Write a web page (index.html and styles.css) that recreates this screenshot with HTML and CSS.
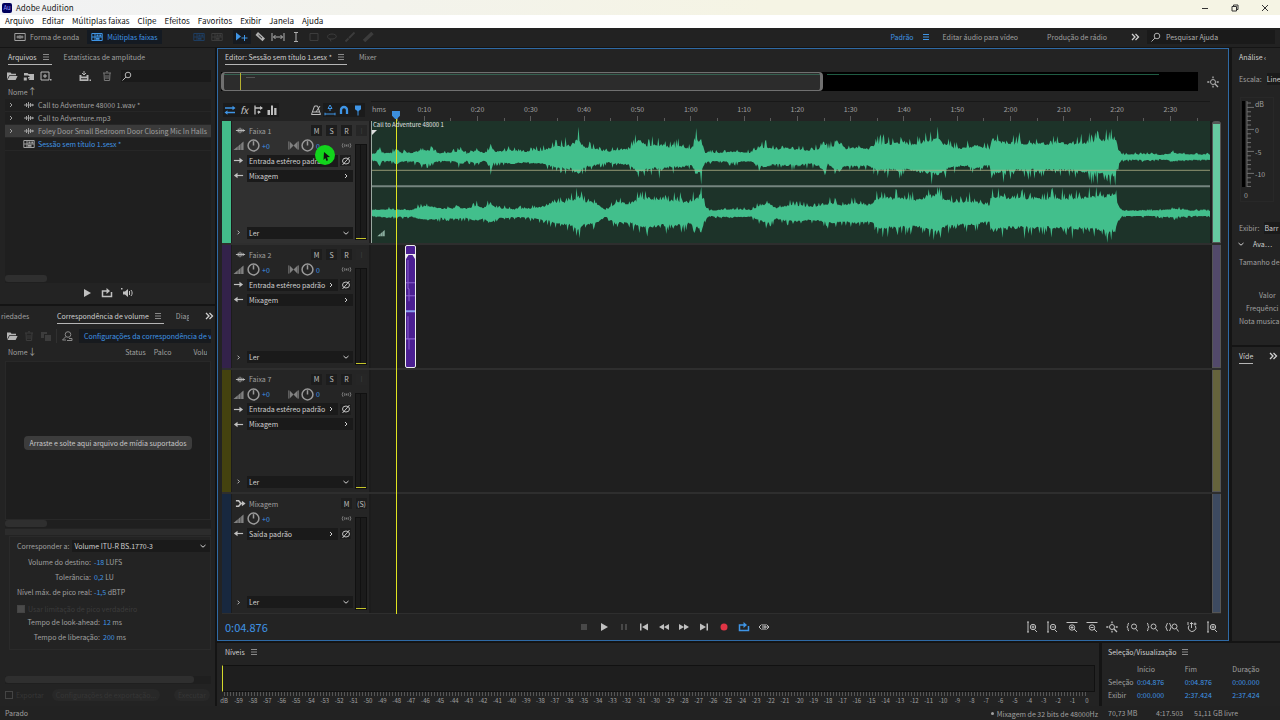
FILE: index.html
```html
<!DOCTYPE html>
<html lang="pt-BR">
<head>
    <meta charset="UTF-8">
    <meta name="viewport" content="width=device-width, initial-scale=1.0">
    <title>Adobe Audition</title>
    <link rel="stylesheet" href="styles.css">
</head>
<body>
    <!-- icon set -->
    <svg class="sprite" aria-hidden="true">
        <symbol id="i-menu" viewBox="0 0 12 12"><path d="M3 3.5h6M3 6h6M3 8.500h6"/></symbol>
        <symbol id="i-more" viewBox="0 0 12 12"><path d="M3 3l3 3-3 3M6.500 3l3 3-3 3" stroke-width="1.300"/></symbol>
        <symbol id="i-right" viewBox="0 0 12 12"><path d="M5 4l2 2-2 2"/></symbol>
        <symbol id="i-down" viewBox="0 0 12 12"><path d="M3.500 5L6 7.200 8.500 5"/></symbol>
        <symbol id="i-search" viewBox="0 0 12 12"><circle cx="7" cy="5" r="2.800"/><path d="M5 7L1.500 10.500"/></symbol>
        <symbol id="i-clip" viewBox="0 0 12 12"><path d="M1 6h10M3.500 4v4M5.500 3v6M7.500 4v4M9.300 4.800v2.400"/></symbol>
        <symbol id="i-wave" viewBox="0 0 12 12"><path d="M.8 2.500h10.400v7H.8zM2.500 6h7M4 4.500v3M6 4v4M8 4.500v3"/></symbol>
        <symbol id="i-multi" viewBox="0 0 12 12"><path d="M.8 2.500h10.400v7H.8zM1 6h10M4 2.500v7"/><path class="solid" d="M5.500 3.500h2v2h-2zM8.300 3.500h2v2h-2zM5 6.800h3.500v2H5z"/></symbol>
        <symbol id="i-folder" viewBox="0 0 12 12"><path class="solid" d="M1 2.500h3.500l1 1.200H10v1.500H3.200L1 9.500zM3.600 6h8l-2 4H1.500z"/></symbol>
        <symbol id="i-import" viewBox="0 0 12 12"><path class="solid" d="M1 3h3.500l1 1H11v6H5.500L7 8.500H5V7h2L5.500 5.500H1zM.8 7.500h3v3h-3z"/></symbol>
        <symbol id="i-new" viewBox="0 0 12 12"><path d="M1 2h8v8H1zM5 4v4M3 6h4"/><path class="solid" d="M10 9h1.500v1.500H10z"/></symbol>
        <symbol id="i-insert" viewBox="0 0 12 12"><path d="M5 1v4M3 3l2 2 2-2"/><path class="solid" d="M.5 5h2v1.500h5V5h2v6h-9zM10.500 9.500H12V11h-1.500z"/><path class="cut" d="M2 8.800h6"/></symbol>
        <symbol id="i-trash" viewBox="0 0 12 12"><path d="M2 3h8M5 1.800h2M3 3l.4 7.500h5.200L9 3M5 5v4M7 5v4"/></symbol>
        <symbol id="i-copy" viewBox="0 0 12 12"><path class="solid" d="M1 2h6v2H4v4H1zM5 5h6v6H5z"/></symbol>
        <symbol id="i-scan" viewBox="0 0 12 12"><circle cx="7" cy="4.500" r="2.800"/><path d="M5 6.500L1.500 10H5M8 8.500h3v2H6"/></symbol>
        <symbol id="i-play" viewBox="0 0 12 12"><path class="solid" d="M3 2l7 4-7 4z"/></symbol>
        <symbol id="i-stop" viewBox="0 0 12 12"><path class="solid" d="M3 3h6v6H3z"/></symbol>
        <symbol id="i-pause" viewBox="0 0 12 12"><path class="solid" d="M3 3h2v6H3zM7 3h2v6H7z"/></symbol>
        <symbol id="i-first" viewBox="0 0 12 12"><path class="solid" d="M2 2.500h1.500v7H2zM10 2.500v7L4 6z"/></symbol>
        <symbol id="i-last" viewBox="0 0 12 12"><path class="solid" d="M8.500 2.500H10v7H8.500zM2 2.500l6 3.500-6 3.500z"/></symbol>
        <symbol id="i-rew" viewBox="0 0 12 12"><path class="solid" d="M6 3v6L1 6zM11 3v6L6 6z"/></symbol>
        <symbol id="i-fwd" viewBox="0 0 12 12"><path class="solid" d="M1 3l5 3-5 3zM6 3l5 3-5 3z"/></symbol>
        <symbol id="i-rec" viewBox="0 0 12 12"><circle class="solid" cx="6" cy="6" r="3.500"/></symbol>
        <symbol id="i-loop" viewBox="0 0 12 12"><path d="M4 4H1.500v5.500h9V5M4 4h3" stroke-width="1.500"/><path class="solid" d="M5.500 1L9 4 5.500 7z"/></symbol>
        <symbol id="i-skip" viewBox="0 0 12 12"><path d="M3.500 3.500L1 6l2.500 2.500M5 3v6M7 3v6M6 6h4.500M8.500 3.500L11 6 8.500 8.500"/></symbol>
        <symbol id="i-speaker" viewBox="0 0 12 12"><path class="solid" d="M2 4.500h2L7 2v8L4 7.500H2zM0 1h1.500v1.500H0z"/><path d="M8.500 4v4M10 3c1.500 2 1.500 4 0 6"/></symbol>
        <symbol id="i-move" viewBox="0 0 12 12"><path class="solid" d="M0 1.500l5 4-5 4z"/><path d="M5.500 7h6M8.500 4v6"/></symbol>
        <symbol id="i-razor" viewBox="0 0 12 12"><path class="solid" d="M4 1l7 6.500-2.500 2.800L1.500 4z"/><path class="cut" d="M4.500 4l3.500 3.200"/></symbol>
        <symbol id="i-slip" viewBox="0 0 14 12"><path d="M1 2v8M13 2v8M2.500 6h9M4.500 4l-2 2 2 2M9.500 4l2 2-2 2"/></symbol>
        <symbol id="i-ibeam" viewBox="0 0 12 12"><path d="M4 1.500h4M6 1.500v9M4 10.500h4"/></symbol>
        <symbol id="i-marquee" viewBox="0 0 12 12"><path d="M2 2.500h8v7H2z"/></symbol>
        <symbol id="i-lasso" viewBox="0 0 12 12"><path d="M4 8C0 7 1 3 6 3s6 4 1 5H4l1 2.500"/></symbol>
        <symbol id="i-brush" viewBox="0 0 12 12"><path d="M10.500 1.500L5 7M4.500 7.500L1.500 10.500" stroke-width="1.800"/></symbol>
        <symbol id="i-heal" viewBox="0 0 12 12"><path d="M10.500 2L2 10" stroke-width="3.500"/></symbol>
        <symbol id="i-swap" viewBox="0 0 12 12"><path d="M1 4h9M2 8.500h9" stroke-width="1.400"/><path class="solid" d="M8.500 1.800L11.500 4l-3 2.200zM3.500 6.300L.5 8.500l3 2.200z"/></symbol>
        <symbol id="i-route" viewBox="0 0 12 12"><path d="M3 1.500v9M3 4h7M5.500 8H8" stroke-width="1.300"/><path class="solid" d="M8 2l3 2-3 2zM6 6.500L9 8 6 10z"/></symbol>
        <symbol id="i-eq" viewBox="0 0 12 12"><path class="solid" d="M1.500 6H4v5H1.500zM5 1.500h2V11H5zM8.200 4h2.300v7H8.200z"/></symbol>
        <symbol id="i-metro" viewBox="0 0 12 12"><path d="M4.500 2h3l3 8.500h-9zM6 8l4-6M3 8h6"/></symbol>
        <symbol id="i-snapt" viewBox="0 0 12 12"><path d="M1 10h10M6 1L4 4.500h4zM6 4.500V7M1 8.700v2.600M11 8.700v2.600"/></symbol>
        <symbol id="i-magnet" viewBox="0 0 12 12"><path d="M3 10V6a3 3 0 0 1 6 0v4" stroke-width="2.300"/></symbol>
        <symbol id="i-marker" viewBox="0 0 12 12"><path class="solid" d="M3 1.500h6v3.700L6 7.500 3 5.200z"/><path d="M6 6.500v5"/></symbol>
        <symbol id="i-vol" viewBox="0 0 12 12"><path class="solid" d="M.5 11L11.500 1.500V11z"/><path class="cut" d="M5.500 5v6M8.500 3v8" stroke-width=".5"/></symbol>
        <symbol id="i-knob" viewBox="0 0 12 12"><circle cx="6" cy="6" r="5" stroke-width="1.400"/><path d="M6 2v4" stroke-width="1.400"/></symbol>
        <symbol id="i-pan" viewBox="0 0 12 12"><path class="solid" d="M2 2l4 4-4 4zM10.500 1.500L6 6l4.500 4.500z"/><path d="M.9 1.500v9M11.300 1.500v9"/></symbol>
        <symbol id="i-monitor" viewBox="0 0 12 12"><path d="M2.200 3.500q-1.800 2.500 0 5M4.200 4.500q-1 1.500 0 3M7.800 4.500q1 1.500 0 3M9.800 3.500q1.800 2.500 0 5"/><circle class="solid" cx="6" cy="6" r="1"/></symbol>
        <symbol id="i-in" viewBox="0 0 12 12"><path d="M1 6h8" stroke-width="1.300"/><path class="solid" d="M7 3L11 6 7 9z"/></symbol>
        <symbol id="i-out" viewBox="0 0 12 12"><path d="M3 6h8" stroke-width="1.300"/><path class="solid" d="M5 3L1 6l4 3z"/></symbol>
        <symbol id="i-phase" viewBox="0 0 12 12"><ellipse cx="6" cy="6" rx="3.500" ry="3"/><path d="M2.500 10l7-8"/></symbol>
        <symbol id="i-mix" viewBox="0 0 12 12"><path d="M1 3h3l2.500 3L4 9H1M5 6h5" stroke-width="1.800"/><path class="solid" d="M7.500 3L11.500 6l-4 3z"/></symbol>
        <symbol id="i-zin-v" viewBox="0 0 12 12"><path d="M1 1h2M2 1v10M1 11h2M8.500 8.500l2.500 2.500M5.500 6h3M7 4.500v3"/><circle cx="7" cy="6" r="2.700"/></symbol>
        <symbol id="i-zout-v" viewBox="0 0 12 12"><path d="M1 1h2M2 1v10M1 11h2M8.500 8.500l2.500 2.500M5.500 6h3"/><circle cx="7" cy="6" r="2.700"/></symbol>
        <symbol id="i-zin-h" viewBox="0 0 12 12"><path d="M.5 1.500h11M8 8l3 3M4.500 6.500h3M6 5v3"/><circle cx="6" cy="6.500" r="2.700"/></symbol>
        <symbol id="i-zout-h" viewBox="0 0 12 12"><path d="M.5 1.500h11M8 8l3 3M4.500 6.500h3"/><circle cx="6" cy="6.500" r="2.700"/></symbol>
        <symbol id="i-zfull" viewBox="0 0 12 12"><circle cx="6" cy="6" r="2.500"/><path d="M7.800 7.800L11 11M6 .5v1.800M6 9.700v1.800M.3 6h2M9.700 6h2" stroke-width="1.300"/></symbol>
        <symbol id="i-zleft" viewBox="0 0 12 12"><path d="M3 2Q1.500 2.500 2 4.500L1 6l1 1.500Q1.500 9.500 3 10M9.500 7.500L12 10.500"/><circle cx="8" cy="5.500" r="2.500"/></symbol>
        <symbol id="i-zright" viewBox="0 0 12 12"><path d="M1 2q1.500.5 1 2.500L3 6 2 7.500Q2.500 9.500 1 10M9.500 7.500L12 10.500"/><circle cx="7.500" cy="5.500" r="2.500"/></symbol>
        <symbol id="i-zsel" viewBox="0 0 14 12"><path d="M2.500 2L.8 6l1.700 4M4.500 2l1.700 4-1.700 4M11.500 7.500L13.500 10.500"/><circle cx="9.500" cy="5.500" r="2.500"/></symbol>
        <symbol id="i-ztime" viewBox="0 0 12 12"><path d="M3 4.500a3.800 3.800 0 1 0 6.500.5M5.500 7V1.500M4 3l1.500-1.500L7 3M2 1v3M9 1.500v3M7.500 3h3"/></symbol>
    </svg>

    <header class="titlebar">
        <span class="app-logo">Au</span>
        <h1>Adobe Audition</h1>
        <div class="window-buttons">
            <button aria-label="Minimizar"><svg viewBox="0 0 12 12"><path d="M3 6.500h6"/></svg></button>
            <button aria-label="Restaurar"><svg viewBox="0 0 12 12"><path d="M3 4.500h4.500V9H3zM4.500 4.500V3H9v4.500H7.500"/></svg></button>
            <button aria-label="Fechar"><svg viewBox="0 0 12 12"><path d="M3 3l6 6M9 3L3 9"/></svg></button>
        </div>
    </header>

    <nav class="menubar">
        <a href="#">Arquivo</a>
        <a href="#">Editar</a>
        <a href="#">Múltiplas faixas</a>
        <a href="#">Clipe</a>
        <a href="#">Efeitos</a>
        <a href="#">Favoritos</a>
        <a href="#">Exibir</a>
        <a href="#">Janela</a>
        <a href="#">Ajuda</a>
    </nav>

    <div class="toolbar">
        <button class="view-button"><svg><use href="#i-wave"/></svg>Forma de onda</button>
        <button class="view-button on"><svg><use href="#i-multi"/></svg>Múltiplas faixas</button>
        <div class="tools">
            <button class="off blue" aria-label="Espectral"><svg><use href="#i-multi"/></svg></button>
            <button class="off" aria-label="Tom"><svg><use href="#i-multi"/></svg></button>
            <span class="tool-gap"></span>
            <button class="blue pressed" aria-label="Mover"><svg><use href="#i-move"/></svg></button>
            <button aria-label="Lâmina"><svg><use href="#i-razor"/></svg></button>
            <button aria-label="Deslizar"><svg class="wide"><use href="#i-slip"/></svg></button>
            <button aria-label="Tempo"><svg><use href="#i-ibeam"/></svg></button>
            <button class="off" aria-label="Marca"><svg><use href="#i-marquee"/></svg></button>
            <button class="off" aria-label="Laço"><svg><use href="#i-lasso"/></svg></button>
            <button class="off" aria-label="Pincel"><svg><use href="#i-brush"/></svg></button>
            <button class="off" aria-label="Recuperação"><svg><use href="#i-heal"/></svg></button>
        </div>
        <div class="workspaces">
            <a href="#" class="current">Padrão</a>
            <svg class="blue"><use href="#i-menu"/></svg>
            <a href="#">Editar áudio para vídeo</a>
            <a href="#" class="radio">Produção de rádio</a>
            <svg><use href="#i-more"/></svg>
        </div>
        <label class="help-search"><svg><use href="#i-search"/></svg><input type="text" placeholder="Pesquisar Ajuda" aria-label="Pesquisar Ajuda"></label>
    </div>

    <div class="workspace">
        <aside class="left">
            <section class="panel files">
                <div class="tabs">
                    <a href="#" class="tab active">Arquivos <svg><use href="#i-menu"/></svg></a>
                    <a href="#" class="tab">Estatísticas de amplitude</a>
                </div>
                <div class="icon-row">
                    <button aria-label="Abrir"><svg><use href="#i-folder"/></svg></button>
                    <button aria-label="Importar"><svg><use href="#i-import"/></svg></button>
                    <button aria-label="Novo"><svg><use href="#i-new"/></svg></button>
                    <button class="push" aria-label="Inserir"><svg><use href="#i-insert"/></svg></button>
                    <button class="dim" aria-label="Excluir"><svg><use href="#i-trash"/></svg></button>
                    <label class="file-search"><svg><use href="#i-search"/></svg><input type="text" aria-label="Filtrar arquivos"></label>
                </div>
                <div class="list-head">Nome<span class="arrow">↑</span></div>
                <ul class="file-list">
                    <li><svg><use href="#i-right"/></svg><svg><use href="#i-clip"/></svg>Call to Adventure 48000 1.wav *</li>
                    <li><svg><use href="#i-right"/></svg><svg><use href="#i-clip"/></svg>Call to Adventure.mp3</li>
                    <li class="selected"><svg><use href="#i-right"/></svg><svg><use href="#i-clip"/></svg>Foley Door Small Bedroom Door Closing Mic In Halls</li>
                    <li class="session"><svg></svg><svg><use href="#i-multi"/></svg><a href="#">Sessão sem título 1.sesx *</a></li>
                </ul>
                <div class="hscroll"><i></i></div>
                <div class="preview">
                    <button aria-label="Reproduzir"><svg><use href="#i-play"/></svg></button>
                    <button aria-label="Repetir"><svg><use href="#i-loop"/></svg></button>
                    <button aria-label="Reprodução automática"><svg><use href="#i-speaker"/></svg></button>
                </div>
            </section>

            <section class="panel loudness">
                <div class="tabs">
                    <a href="#" class="tab cut-left">riedades</a>
                    <a href="#" class="tab active">Correspondência de volume <svg><use href="#i-menu"/></svg></a>
                    <a href="#" class="tab cut-right">Diag</a>
                    <svg class="more"><use href="#i-more"/></svg>
                </div>
                <div class="icon-row">
                    <button aria-label="Abrir"><svg><use href="#i-folder"/></svg></button>
                    <button class="off" aria-label="Excluir"><svg><use href="#i-trash"/></svg></button>
                    <button class="off" aria-label="Copiar"><svg><use href="#i-copy"/></svg></button>
                    <button class="scan" aria-label="Verificar"><svg><use href="#i-scan"/></svg></button>
                    <button class="settings">Configurações da correspondência de v</button>
                </div>
                <div class="list-head columns"><span class="c-name">Nome<span class="arrow">↓</span></span><span>Status</span><span>Palco</span><span class="c-vol">Volu</span></div>
                <div class="drop-zone"><p>Arraste e solte aqui arquivo de mídia suportados</p></div>
                <div class="hscroll"><i></i></div>
                <div class="splitter"></div>
                <form class="match">
                    <div class="match-type">
                        <label for="match">Corresponder a:</label>
                        <div class="field"><select id="match"><option>Volume ITU-R BS.1770-3</option></select><svg><use href="#i-down"/></svg></div>
                    </div>
                    <dl>
                        <dt>Volume do destino:</dt><dd><a href="#">-18</a> LUFS</dd>
                        <dt>Tolerância:</dt><dd><a href="#">0,2</a> LU</dd>
                        <dt>Nível máx. de pico real:</dt><dd><a href="#">-1,5</a> dBTP</dd>
                    </dl>
                    <label class="limit"><input type="checkbox" checked disabled>Usar limitação de pico verdadeiro</label>
                    <dl class="wide">
                        <dt>Tempo de look-ahead:</dt><dd><a href="#">12</a> ms</dd>
                        <dt>Tempo de liberação:</dt><dd><a href="#">200</a> ms</dd>
                    </dl>
                </form>
                <div class="hscroll long"><i></i></div>
                <div class="export">
                    <label><input type="checkbox" disabled>Exportar</label>
                    <button disabled>Configurações de exportação...</button>
                    <button disabled>Executar</button>
                </div>
            </section>
        </aside>

        <div class="center">
            <div class="upper">
                <main class="editor">
                    <div class="tabs">
                        <a href="#" class="tab active">Editor: Sessão sem título 1.sesx * <svg><use href="#i-menu"/></svg></a>
                        <a href="#" class="tab">Mixer</a>
                    </div>

                    <div class="navigator">
                        <div class="nav-track"><div class="nav-view"><i class="nav-head"></i><i class="nav-clip"></i></div><i class="nav-line"></i></div>
                        <button aria-label="Zoom total"><svg><use href="#i-zfull"/></svg></button>
                    </div>

                    <div class="timeline-head">
                        <div class="track-tools">
                            <button class="blue pressed" aria-label="Entradas e saídas"><svg><use href="#i-swap"/></svg></button>
                            <button class="fx" aria-label="Efeitos">fx</button>
                            <button aria-label="Envios"><svg><use href="#i-route"/></svg></button>
                            <button aria-label="Equalizador"><svg><use href="#i-eq"/></svg></button>
                            <button class="push" aria-label="Metrônomo"><svg><use href="#i-metro"/></svg></button>
                            <button class="blue pressed" aria-label="Ajuste de tempo"><svg><use href="#i-snapt"/></svg></button>
                            <button class="blue pressed" aria-label="Encaixe"><svg><use href="#i-magnet"/></svg></button>
                            <button class="blue pressed" aria-label="Marcador"><svg><use href="#i-marker"/></svg></button>
                        </div>
                        <div class="ruler" id="ruler"><span class="unit">hms</span></div>
                    </div>

                    <div class="tracks">
                        <section class="track green selected">
                            <div class="controls">
                                <div class="row head"><svg><use href="#i-clip"/></svg><span class="name">Faixa 1</span><button>M</button><button>S</button><button>R</button><button class="off">I</button></div>
                                <div class="body">
                                    <div class="rows">
                                        <div class="row"><svg class="grey"><use href="#i-vol"/></svg><svg class="knob"><use href="#i-knob"/></svg><a href="#" class="gain">+0</a><svg class="grey"><use href="#i-pan"/></svg><svg class="knob"><use href="#i-knob"/></svg><a href="#" class="pan">0</a><svg class="grey"><use href="#i-monitor"/></svg></div>
                                        <div class="row"><svg><use href="#i-in"/></svg><div class="field"><select aria-label="Entrada"><option>Entrada estéreo padrão</option></select><svg><use href="#i-right"/></svg></div><button aria-label="Fase"><svg><use href="#i-phase"/></svg></button></div>
                                        <div class="row"><svg><use href="#i-out"/></svg><div class="field"><select aria-label="Saída"><option>Mixagem</option></select><svg><use href="#i-right"/></svg></div></div>
                                        <div class="row last"><svg><use href="#i-right"/></svg><div class="field"><select aria-label="Automação"><option>Ler</option></select><svg><use href="#i-down"/></svg></div></div>
                                    </div>
                                    <div class="vu"></div>
                                </div>
                                <div class="pointer"><svg viewBox="0 0 20 20"><path d="M9 7l6 5-3 .3 1 3-1.500.6-1.200-2.900L8.500 15z"/></svg></div>
                            </div>
                            <div class="lane">
                                <div class="clip-audio">
                                    <span class="clip-name">Call to Adventure 48000 1</span>
                                    <svg id="waveform" viewBox="0 0 840 122" preserveAspectRatio="none"></svg>
                                    <svg class="clip-gain"><use href="#i-vol"/></svg>
                                </div>
                            </div>
                            <div class="overview"></div>
                        </section>

                        <section class="track purple">
                            <div class="controls">
                                <div class="row head"><svg><use href="#i-clip"/></svg><span class="name">Faixa 2</span><button>M</button><button>S</button><button>R</button><button class="off">I</button></div>
                                <div class="body">
                                    <div class="rows">
                                        <div class="row"><svg class="grey"><use href="#i-vol"/></svg><svg class="knob"><use href="#i-knob"/></svg><a href="#" class="gain">+0</a><svg class="grey"><use href="#i-pan"/></svg><svg class="knob"><use href="#i-knob"/></svg><a href="#" class="pan">0</a><svg class="grey"><use href="#i-monitor"/></svg></div>
                                        <div class="row"><svg><use href="#i-in"/></svg><div class="field"><select aria-label="Entrada"><option>Entrada estéreo padrão</option></select><svg><use href="#i-right"/></svg></div><button aria-label="Fase"><svg><use href="#i-phase"/></svg></button></div>
                                        <div class="row"><svg><use href="#i-out"/></svg><div class="field"><select aria-label="Saída"><option>Mixagem</option></select><svg><use href="#i-right"/></svg></div></div>
                                        <div class="row last"><svg><use href="#i-right"/></svg><div class="field"><select aria-label="Automação"><option>Ler</option></select><svg><use href="#i-down"/></svg></div></div>
                                    </div>
                                    <div class="vu"></div>
                                </div>
                            </div>
                            <div class="lane">
                                <div class="clip-door">
                                    <svg viewBox="0 0 9 120" preserveAspectRatio="none"><path class="fade" d="M0 8h9v5L6.500 9h-4L0 13z"/><path d="M0 36.500h9M0 49.500h9M0 92.500h9M2 14v28l1 1v12M2 70v22l1 1v10"/><path class="env" d="M0 65h9"/></svg>
                                </div>
                            </div>
                            <div class="overview"></div>
                        </section>

                        <section class="track olive">
                            <div class="controls">
                                <div class="row head"><svg><use href="#i-clip"/></svg><span class="name">Faixa 7</span><button>M</button><button>S</button><button>R</button><button class="off">I</button></div>
                                <div class="body">
                                    <div class="rows">
                                        <div class="row"><svg class="grey"><use href="#i-vol"/></svg><svg class="knob"><use href="#i-knob"/></svg><a href="#" class="gain">+0</a><svg class="grey"><use href="#i-pan"/></svg><svg class="knob"><use href="#i-knob"/></svg><a href="#" class="pan">0</a><svg class="grey"><use href="#i-monitor"/></svg></div>
                                        <div class="row"><svg><use href="#i-in"/></svg><div class="field"><select aria-label="Entrada"><option>Entrada estéreo padrão</option></select><svg><use href="#i-right"/></svg></div><button aria-label="Fase"><svg><use href="#i-phase"/></svg></button></div>
                                        <div class="row"><svg><use href="#i-out"/></svg><div class="field"><select aria-label="Saída"><option>Mixagem</option></select><svg><use href="#i-right"/></svg></div></div>
                                        <div class="row last"><svg><use href="#i-right"/></svg><div class="field"><select aria-label="Automação"><option>Ler</option></select><svg><use href="#i-down"/></svg></div></div>
                                    </div>
                                    <div class="vu"></div>
                                </div>
                            </div>
                            <div class="lane"></div>
                            <div class="overview"></div>
                        </section>

                        <section class="track navy">
                            <div class="controls">
                                <div class="row head"><svg><use href="#i-mix"/></svg><span class="name">Mixagem</span><button>M</button><button>(S)</button></div>
                                <div class="body">
                                    <div class="rows">
                                        <div class="row"><svg class="grey"><use href="#i-vol"/></svg><svg class="knob"><use href="#i-knob"/></svg><a href="#" class="gain">+0</a><svg class="grey end"><use href="#i-monitor"/></svg></div>
                                        <div class="row"><svg><use href="#i-out"/></svg><div class="field"><select aria-label="Saída"><option>Saída padrão</option></select><svg><use href="#i-right"/></svg></div><button aria-label="Fase"><svg><use href="#i-phase"/></svg></button></div>
                                        <div class="row last"><svg><use href="#i-right"/></svg><div class="field"><select aria-label="Automação"><option>Ler</option></select><svg><use href="#i-down"/></svg></div></div>
                                    </div>
                                    <div class="vu"></div>
                                </div>
                            </div>
                            <div class="lane"></div>
                            <div class="overview"></div>
                        </section>

                        <div class="playhead-layer"><div class="playhead" id="playhead"></div></div>
                    </div>

                    <div class="transport">
                        <output class="time">0:04.876</output>
                        <div class="buttons">
                            <button class="off" aria-label="Parar"><svg><use href="#i-stop"/></svg></button>
                            <button aria-label="Reproduzir"><svg><use href="#i-play"/></svg></button>
                            <button class="off" aria-label="Pausar"><svg><use href="#i-pause"/></svg></button>
                            <button aria-label="Início"><svg><use href="#i-first"/></svg></button>
                            <button aria-label="Retroceder"><svg><use href="#i-rew"/></svg></button>
                            <button aria-label="Avançar"><svg><use href="#i-fwd"/></svg></button>
                            <button aria-label="Fim"><svg><use href="#i-last"/></svg></button>
                            <button class="red" aria-label="Gravar"><svg><use href="#i-rec"/></svg></button>
                            <button class="blue" aria-label="Repetir"><svg><use href="#i-loop"/></svg></button>
                            <button aria-label="Ignorar seleção"><svg><use href="#i-skip"/></svg></button>
                        </div>
                        <div class="buttons zooms">
                            <button aria-label="Mais amplitude"><svg><use href="#i-zin-v"/></svg></button>
                            <button aria-label="Menos amplitude"><svg><use href="#i-zout-v"/></svg></button>
                            <button aria-label="Mais tempo"><svg><use href="#i-zin-h"/></svg></button>
                            <button aria-label="Menos tempo"><svg><use href="#i-zout-h"/></svg></button>
                            <button aria-label="Zoom total"><svg><use href="#i-zfull"/></svg></button>
                            <button aria-label="Zoom no ponto de entrada"><svg><use href="#i-zleft"/></svg></button>
                            <button aria-label="Zoom no ponto de saída"><svg><use href="#i-zright"/></svg></button>
                            <button aria-label="Zoom na seleção"><svg class="wide"><use href="#i-zsel"/></svg></button>
                            <button aria-label="Zoom temporizado"><svg><use href="#i-ztime"/></svg></button>
                            <button aria-label="Zoom na faixa"><svg><use href="#i-zin-v"/></svg></button>
                        </div>
                    </div>
                </main>

                <aside class="right">
                    <section class="panel phase">
                        <div class="tabs"><a href="#" class="tab strong">Análise ‹</a></div>
                        <div class="scale-row"><label for="scale">Escala:</label><select id="scale"><option>Line</option></select></div>
                        <div class="db-meter">
                            <svg viewBox="0 0 14 86"><path class="bar" d="M1 0h3v86H1z"/><path id="db-ticks" d=""/></svg>
                            <ul><li>dB</li><li>0</li><li>-5</li><li>-10</li></ul>
                            <span>0</span>
                        </div>
                        <div class="show-row"><label for="show">Exibir:</label><select id="show"><option>Barr</option></select></div>
                        <div class="advanced"><svg><use href="#i-down"/></svg>Ava…</div>
                        <p class="size">Tamanho de</p>
                        <p class="value">Valor</p>
                        <p class="freq">Frequênci</p>
                        <p>Nota musica</p>
                    </section>
                    <section class="panel video">
                        <div class="tabs"><a href="#" class="tab active">Víde</a><svg class="more"><use href="#i-more"/></svg></div>
                    </section>
                </aside>
            </div>

            <div class="lower">
                <section class="panel levels">
                    <div class="tabs"><a href="#" class="tab strong">Níveis <svg><use href="#i-menu"/></svg></a></div>
                    <div class="level-meter"></div>
                    <div class="level-ticks"></div>
                    <ol class="level-scale" id="scale-db"></ol>
                </section>
                <section class="panel selection">
                    <div class="tabs"><a href="#" class="tab strong">Seleção/Visualização <svg><use href="#i-menu"/></svg></a></div>
                    <table>
                        <thead><tr><td></td><th>Início</th><th>Fim</th><th>Duração</th></tr></thead>
                        <tbody>
                            <tr><th>Seleção</th><td>0:04.876</td><td>0:04.876</td><td>0:00.000</td></tr>
                            <tr><th>Exibir</th><td>0:00.000</td><td>2:37.424</td><td>2:37.424</td></tr>
                        </tbody>
                    </table>
                </section>
            </div>
        </div>
    </div>

    <footer class="status">
        <span>Parado</span>
        <span class="mix"><i class="dot"></i>Mixagem de 32 bits de 48000Hz</span>
        <span class="mem">70,73 MB</span>
        <span class="len">4:17.503</span>
        <span class="free">51,11 GB livre</span>
    </footer>

    <script src="script.js"></script>
</body>
</html>
```
FILE: styles.css
```css
:root {
    --ui: "Noto Sans CJK JP", "Noto Sans", sans-serif;
    --bg: #232323;
    --dark: #1a1a1a;
    --gap: #141414;
    --text: #a0a0a0;
    --bright: #d0d0d0;
    --blue: #3f95e6;
}
* {
    box-sizing: border-box;
}
body {
    margin: 0;
    min-height: 100vh;
    display: flex;
    flex-direction: column;
    background-color: var(--gap);
    color: var(--text);
    font-family: var(--ui);
    font-size: 7px;
    line-height: 12px;
    overflow: hidden;
}
h1, p, ul, ol, dl, dd {
    margin: 0;
    padding: 0;
    list-style: none;
}
a {
    color: inherit;
    text-decoration: none;
}
button, input, select {
    margin: 0;
    padding: 0;
    border: none;
    background: none;
    color: inherit;
    font: inherit;
}
select {
    appearance: none;
}
svg {
    width: 12px;
    height: 12px;
    flex: none;
    fill: none;
    stroke: currentColor;
    stroke-width: 1;
}
svg.wide {
    width: 14px;
}
.sprite {
    position: absolute;
    width: 0;
    height: 0;
}
.solid {
    fill: currentColor;
    stroke: none;
}
.cut {
    stroke: #222;
}
button {
    display: flex;
    align-items: center;
    justify-content: center;
    white-space: nowrap;
}
.blue {
    color: var(--blue);
}
.red {
    color: #e03545;
}
.dim {
    color: #777;
}
.off {
    color: #3c3c3c;
}
.off.blue {
    color: #1e3d60;
}
.pressed {
    background-color: #161a20;
}

/* window chrome */
.titlebar {
    display: flex;
    align-items: center;
    height: 15px;
    padding-left: 2px;
    background: linear-gradient(90deg, #f1f2f4, #f5f4e4 60%);
    color: #222;
}
.app-logo {
    width: 10px;
    height: 10px;
    border-radius: 2px;
    background-color: #00005b;
    color: #9999ff;
    font-size: 6px;
    line-height: 10px;
    text-align: center;
}
h1 {
    margin-left: 4px;
    font-size: 8px;
    font-weight: normal;
}
.window-buttons {
    display: flex;
    margin-left: auto;
    color: #333;
}
.window-buttons button {
    width: 30px;
}
.menubar {
    display: flex;
    gap: 8px;
    height: 13px;
    padding-left: 5px;
    background-color: #fff;
    color: #111;
    font-size: 8px;
}

/* toolbar */
.toolbar {
    display: flex;
    align-items: center;
    height: 20px;
    padding: 0 0 1px 10px;
    border-bottom: 1px solid #151515;
    background-color: #222;
}
.view-button {
    gap: 4px;
    height: 14px;
    padding: 0 4px;
}
.view-button.on {
    margin-left: 4px;
    background-color: #141a22;
    color: var(--blue);
}
.tools {
    display: flex;
    margin-left: 28px;
    color: #b0b0b0;
}
.tools button {
    width: 18px;
    height: 14px;
}
.tool-gap {
    width: 7px;
}
.workspaces {
    display: flex;
    align-items: center;
    margin-left: auto;
}
.workspaces a {
    margin-right: 29px;
}
.workspaces .current {
    margin-right: 6px;
    color: var(--blue);
}
.workspaces .blue {
    margin-right: 11px;
}
.workspaces .radio {
    margin-right: 22px;
}
.workspaces svg:last-child {
    margin-right: 6px;
    color: var(--bright);
}
.help-search {
    display: flex;
    align-items: center;
    gap: 4px;
    width: 128px;
    height: 14px;
    margin-right: 5px;
    padding-left: 3px;
    background-color: var(--dark);
    color: #b0b0b0;
}
.help-search input, .file-search input {
    flex: 1;
    min-width: 0;
    height: 12px;
}
.help-search input::placeholder {
    color: #b0b0b0;
}

/* panels */
.workspace {
    flex: 1;
    display: flex;
    min-height: 0;
}
.panel {
    background-color: var(--bg);
}
.tabs {
    display: flex;
    height: 18px;
    padding: 2px 0 0 8px;
}
.tab {
    display: flex;
    height: 14px;
    margin-right: 12px;
    white-space: nowrap;
}
.tab.active {
    border-bottom: 1px solid #b5b5b5;
    color: var(--bright);
}
.tab.strong {
    color: var(--bright);
}
.tab svg {
    margin-left: 3px;
    color: #8a8a8a;
}
.left {
    flex: none;
    width: 215px;
    display: flex;
    flex-direction: column;
    overflow: hidden;
}
.files {
    height: 256px;
    display: flex;
    flex-direction: column;
    padding-top: 1px;
}
.icon-row {
    display: flex;
    align-items: center;
    height: 16px;
    margin: 1px 4px 0 3px;
    color: #b5b5b5;
}
.icon-row button {
    width: 17px;
    height: 14px;
}
.icon-row .push {
    margin-left: 22px;
}
.icon-row .dim {
    margin: 0 6px 0 5px;
}
.icon-row .off {
    color: #3c3c3c;
}
.file-search {
    flex: 1;
    display: flex;
    align-items: center;
    height: 12px;
    background-color: var(--dark);
}
.list-head {
    height: 15px;
    padding: 2px 8px 0;
}
.arrow {
    font-size: 9px;
}
.file-list {
    flex: 1;
    margin: 0 4px 0 5px;
    overflow: hidden;
    background-color: #1f1f1f;
}
.file-list li {
    display: flex;
    align-items: center;
    height: 13px;
    border-bottom: 1px solid #262626;
    white-space: nowrap;
}
.file-list svg:nth-child(2) {
    margin: 0 3px 0 6px;
}
.file-list .selected {
    background-color: #3a3a3a;
}
.file-list .session a {
    color: var(--blue);
}
.hscroll {
    height: 8px;
    margin: 0 4px 0 5px;
    background-color: #1f1f1f;
}
.hscroll i {
    display: block;
    width: 42px;
    height: 7px;
    border-radius: 3px;
    background-color: #2f2f2f;
}
.hscroll.long {
    margin-top: 26px;
}
.hscroll.long i {
    width: 189px;
}
.preview {
    display: flex;
    justify-content: center;
    height: 21px;
    padding-right: 2px;
    color: #c0c0c0;
}
.preview button {
    width: 20px;
    height: 19px;
}
.loudness {
    flex: 1;
    display: flex;
    flex-direction: column;
    margin-top: 2px;
    padding-top: 2px;
}
.loudness .tabs {
    padding-left: 1px;
}
.loudness .icon-row {
    margin-top: 2px;
}
.tab.cut-left {
    width: 44px;
}
.tab.cut-right {
    width: 13px;
    overflow: hidden;
}
.more {
    margin-left: auto;
    color: var(--bright);
}
.icon-row .scan {
    width: 21px;
    margin: 0 2px;
    border-left: 1px solid #303030;
    color: #8a8a8a;
}
.icon-row .settings {
    flex: 1;
    justify-content: flex-start;
    min-width: 0;
    padding-left: 5px;
    overflow: hidden;
    background-color: #171a1e;
    color: var(--blue);
}
.columns {
    display: flex;
    height: 17px;
}
.c-name {
    width: 121px;
}
.columns > span + span {
    margin-right: 8px;
}
.columns > .c-vol {
    width: 14px;
    margin: 0 0 0 14px;
    overflow: hidden;
}
.drop-zone {
    flex: 1;
    display: flex;
    align-items: center;
    justify-content: center;
    margin: 0 4px 0 5px;
    padding-top: 4px;
    border: 1px solid #282828;
    background-color: #1e1e1e;
}
.drop-zone p {
    padding: 1px 5px;
    border-radius: 4px;
    background-color: #3c3c3c;
    color: #c8c8c8;
}
.splitter {
    height: 6px;
    margin: 1px 4px 0 5px;
    background-color: #2c2c2c;
}
.match {
    height: 114px;
    margin: 1px 4px 0 9px;
    padding: 3px 0 0 7px;
    border: 1px solid #2a2a2a;
}
.match-type {
    display: flex;
    gap: 3px;
    height: 16px;
}
.field {
    position: relative;
    flex: 1;
    height: 12px;
    background-color: var(--dark);
    color: var(--bright);
}
.field select {
    display: block;
    width: 100%;
    height: 12px;
    padding-left: 2px;
}
.field svg {
    position: absolute;
    right: 1px;
    top: 0;
    pointer-events: none;
}
dl {
    display: grid;
    grid-template-columns: 74px 1fr;
    grid-auto-rows: 15px;
    column-gap: 3px;
}
dl.wide {
    grid-template-columns: 83px 1fr;
}
dt {
    text-align: right;
    white-space: nowrap;
}
dd a {
    color: var(--blue);
}
.limit {
    display: flex;
    align-items: center;
    gap: 3px;
    height: 15px;
    color: #3c3c3c;
}
.limit input, .export input {
    appearance: none;
    width: 8px;
    height: 8px;
    border: 1px solid #444;
}
.limit input:checked {
    background-color: #4a4a4a;
}
.export {
    display: flex;
    align-items: center;
    height: 22px;
    padding: 0 5px;
    color: #363636;
}
.export label {
    display: flex;
    align-items: center;
    gap: 3px;
    margin-right: 8px;
}
.export button {
    padding: 0 4px;
    border-radius: 6px;
    background-color: #282828;
    color: #363636;
}
.export button:last-child {
    margin-left: auto;
}

/* editor */
.center {
    flex: 1;
    display: flex;
    flex-direction: column;
    min-width: 0;
    margin-left: 2px;
}
.upper {
    flex: 1;
    display: flex;
    min-height: 0;
}
.editor {
    flex: 1;
    display: flex;
    flex-direction: column;
    min-width: 0;
    border: 1px solid #2f6aa5;
    background-color: var(--bg);
}
.editor > .tabs {
    padding-left: 7px;
}
.navigator {
    display: flex;
    height: 19px;
    margin: 5px 0 10px 3px;
}
.navigator button {
    width: 30px;
    color: #b0b0b0;
}
.nav-track {
    position: relative;
    flex: 1;
    background-color: #000;
}
.nav-view {
    position: relative;
    width: 61.6%;
    height: 19px;
    border: 1px solid #707070;
    border-width: 1px 3px;
    border-radius: 4px;
    background: linear-gradient(#2c2c2c 1px, #35604f 1px, #35604f 2px, #2c2c2c 2px);
}
.nav-line {
    position: absolute;
    left: 62%;
    right: 39px;
    top: 2px;
    height: 1px;
    background-color: #1f5c43;
}
.nav-head {
    position: absolute;
    left: 16px;
    top: 0;
    width: 1px;
    height: 17px;
    background-color: #b5b030;
}
.nav-clip {
    position: absolute;
    left: 22px;
    top: 4px;
    width: 9px;
    height: 1px;
    background-color: #555;
}
.timeline-head {
    display: grid;
    grid-template-columns: 149px 1fr;
    height: 20px;
    padding: 0 18px 0 4px;
}
.track-tools {
    display: flex;
    align-items: center;
    padding: 0 6px 2px 1px;
    color: #c0c0c0;
}
.track-tools button {
    width: 14px;
    height: 14px;
    background-color: #1b1b1b;
}
.track-tools .push {
    margin-left: auto;
    background: none;
}
.track-tools .fx {
    font-size: 10px;
    font-style: italic;
}
.ruler {
    position: relative;
    border: 1px solid #181818;
    border-width: 1px 0 0;
}
.ruler .unit {
    position: absolute;
    left: 1px;
    top: 1px;
}
.mark {
    position: absolute;
    bottom: 0;
    height: 18px;
    width: 30px;
    margin-left: -15px;
    text-align: center;
    background: linear-gradient(#5a5a5a, #5a5a5a) 50% 100% / 1px 5px no-repeat;
}
.mark.minor {
    background-size: 1px 3px;
}
.tracks {
    position: relative;
    flex: 1;
    display: flex;
    flex-direction: column;
    padding: 0 7px 0 4px;
}
.track {
    flex: 31 1 0;
    display: grid;
    grid-template-columns: 137px 1fr 9px;
    column-gap: 2px;
    padding-left: 10px;
    border-bottom: 2px solid #2e2e2e;
    background: linear-gradient(90deg, var(--tone) 9px, #1c1c1c 9px);
}
.green {
    --tone: #43bd8a;
    --tone-soft: #67c8a0;
}
.purple {
    --tone: #33224a;
    --tone-soft: #52496a;
}
.olive {
    --tone: #44420f;
    --tone-soft: #65633c;
}
.navy {
    --tone: #18283f;
    --tone-soft: #3d4a60;
    flex-grow: 30;
    border-bottom-width: 1px;
}
.controls {
    position: relative;
    display: flex;
    flex-direction: column;
    padding-top: 2px;
    background-color: #252525;
}
.selected .controls {
    background-color: #303030;
}
.row {
    display: flex;
    align-items: center;
    height: 15px;
}
.row > svg {
    width: 13px;
    height: 11px;
    padding: 0 1px;
    color: #c0c0c0;
}
.row > svg:first-child {
    margin-right: 2px;
}
.row > svg.grey {
    color: #808080;
}
.row > svg.grey:first-child {
    margin-right: 1px;
}
.row > svg.knob {
    height: 13px;
    padding: 0;
    color: #999;
}
.row > .end {
    margin-left: auto;
}
.head > svg {
    margin-left: 2px;
}
.head .name {
    flex: 1;
}
.row button {
    width: 11px;
    height: 11px;
    margin: 0 2px;
    background-color: #1d1d1d;
    color: #c0c0c0;
}
.row button.off {
    background-color: #262626;
    color: #3c3c3c;
}
.gain {
    width: 27px;
    padding-left: 2px;
    color: var(--blue);
}
.pan {
    flex: 1;
    padding-left: 2px;
    color: var(--blue);
}
.row .grey + .knob {
    margin-left: 1px;
}
.body {
    flex: 1;
    display: flex;
}
.rows {
    flex: 1;
    display: flex;
    flex-direction: column;
    padding-right: 2px;
}
.row.last {
    margin-top: auto;
    margin-bottom: 3px;
}
.vu {
    width: 12px;
    margin: 6px 2px 3px 0;
    border: 1px solid #111;
    background: linear-gradient(#c5c52a, #c5c52a) 50% 100% / 10px 1px no-repeat, linear-gradient(90deg, #1b1b1b 4px, #111 4px, #111 5px, #1b1b1b 5px);
}
.pointer {
    position: absolute;
    left: 83px;
    top: 24px;
    width: 20px;
    height: 20px;
    border-radius: 50%;
    background-color: #12d41c;
}
.pointer svg {
    width: 20px;
    height: 20px;
    fill: #111;
    stroke: none;
}
.lane {
    position: relative;
    background-color: #1f1f1f;
}
.overview {
    border: 1px solid #555;
    border-width: 0 1px 1px;
    background-color: var(--tone-soft);
}
.green .overview {
    border-top: 3px solid #555;
    border-radius: 3px 3px 0 0;
}
.clip-audio {
    position: absolute;
    inset: 0;
    border-left: 1px solid #9aa8a0;
    background-color: #1d3329;
}
.clip-audio #waveform {
    position: absolute;
    left: 0;
    top: 0;
    width: 100%;
    height: 100%;
    fill: #42bf8c;
    stroke: none;
}
.clip-name {
    position: absolute;
    left: 1px;
    top: -2px;
    z-index: 1;
    color: #e0e0e0;
    font-size: 6px;
}
.clip-gain {
    position: absolute;
    left: 5px;
    bottom: 4px;
    width: 8px;
    color: #8fb5a5;
}
.clip-door {
    position: absolute;
    left: 4%;
    top: 0;
    bottom: 0;
    width: 11px;
    border: 1px solid #eee;
    border-radius: 2px;
    background-color: #4b1f92;
}
.clip-door svg {
    display: block;
    width: 100%;
    height: 100%;
    stroke: #8a5fd0;
}
.clip-door .fade {
    fill: #eee;
    stroke: none;
}
.clip-door .env {
    stroke: #8aa0f0;
    stroke-width: 2;
}
.playhead-layer {
    position: absolute;
    left: 153px;
    right: 18px;
    top: 0;
    bottom: 0;
    pointer-events: none;
}
.playhead {
    position: absolute;
    top: -4px;
    bottom: 0;
    width: 1px;
    margin-left: -1px;
    background-color: #dfe320;
}
.playhead::before {
    content: "";
    position: absolute;
    left: -4px;
    top: -6px;
    width: 8px;
    height: 8px;
    background-color: #3d8fdc;
    clip-path: polygon(0 0, 100% 0, 100% 60%, 60% 100%, 40% 100%, 0 60%);
}
.transport {
    display: grid;
    grid-template-columns: 35% auto 1fr;
    align-items: center;
    height: 26px;
    padding: 0 6px 0 7px;
}
.time {
    color: var(--blue);
    font-size: 11px;
}
.buttons {
    display: flex;
    color: #c0c0c0;
}
.buttons button {
    width: 20px;
    height: 14px;
}
.buttons .off {
    color: #484848;
}
.buttons .red {
    color: #e03545;
}
.buttons .blue {
    color: var(--blue);
}
.zooms {
    justify-content: flex-end;
}

/* right side */
.right {
    flex: none;
    width: 48px;
    display: flex;
    flex-direction: column;
    margin-left: 3px;
    overflow: hidden;
    white-space: nowrap;
}
.right .tabs {
    padding: 3px 0 0 7px;
}
.phase {
    height: 297px;
    overflow: hidden;
}
.scale-row, .show-row {
    display: flex;
    gap: 5px;
    margin-top: 7px;
    padding-left: 7px;
}
.scale-row select, .show-row select {
    flex: none;
    width: 40px;
    height: 12px;
    background-color: var(--dark);
    color: var(--bright);
}
.db-meter {
    display: grid;
    grid-template-columns: 14px 1fr;
    grid-template-rows: 86px 1fr;
    width: 34px;
    height: 105px;
    margin: 12px 0 0 8px;
    border: 1px solid #282828;
}
.db-meter svg {
    width: 14px;
    height: 86px;
    margin-top: 3px;
    stroke: #707070;
}
.db-meter .bar {
    fill: #000;
    stroke: none;
}
.db-meter li {
    height: 22px;
}
.db-meter li:first-child {
    height: 26px;
}
.db-meter span {
    padding: 5px 0 0 3px;
}
.show-row {
    margin-top: 20px;
}
.advanced {
    display: flex;
    gap: 6px;
    margin: 4px 0 0 3px;
    color: var(--bright);
}
.phase p {
    height: 13px;
    padding-left: 7px;
}
.phase .size {
    height: 33px;
    margin-top: 6px;
}
.phase .value {
    padding-left: 27px;
}
.phase .freq {
    padding-left: 14px;
}
.video {
    flex: 1;
    margin-top: 2px;
}
.video .tab {
    width: 14px;
    margin: 0;
}
.video .more {
    margin-right: 1px;
}

/* bottom */
.lower {
    display: flex;
    gap: 3px;
    height: 65px;
    padding-top: 2px;
}
.levels {
    flex: 1;
    min-width: 0;
}
.lower .tabs {
    height: 22px;
    padding-top: 3px;
}
.level-meter {
    height: 27px;
    margin: 0 4px 0 5px;
    border: 1px solid #111;
    border-left: 1px solid #d4d92c;
    background-color: #1e1e1e;
}
.level-ticks {
    height: 4px;
    margin: 0 12px 0 7px;
    background: repeating-linear-gradient(90deg, #555 0 1px, transparent 1px 3px);
}
.level-scale {
    display: grid;
    grid-template-columns: repeat(61, 1fr);
    margin-right: 5px;
    font-size: 6px;
    line-height: 9px;
    text-align: center;
}
.selection {
    width: 178px;
}
.selection .tabs {
    height: 19px;
    padding-left: 6px;
}
table {
    width: 172px;
    margin-left: 6px;
    border-collapse: collapse;
    table-layout: fixed;
}
td, th {
    height: 13px;
    padding: 0;
    font-weight: normal;
    text-align: left;
}
tbody td {
    color: var(--blue);
}
tbody th, thead td {
    width: 29px;
}
.status {
    display: flex;
    height: 14px;
    padding: 1px 0 0 5px;
    background-color: #222;
}
.mix {
    display: flex;
    align-items: center;
    gap: 3px;
    margin-left: auto;
}
.dot {
    width: 3px;
    height: 3px;
    border-radius: 50%;
    background-color: #a0a0a0;
}
.mem {
    width: 48px;
    margin-left: 10px;
}
.len {
    width: 38px;
}
.free {
    width: 86px;
}
```
FILE: script.js
```javascript
const DURATION = 157.424;

// ruler
const ruler = document.getElementById("ruler");
for (let t = 5; t < DURATION; t += 5) {
  const mark = document.createElement("span");
  mark.className = t % 10 ? "mark minor" : "mark";
  mark.style.left = `${(t / DURATION) * 100}%`;
  if (t % 10 === 0) {
    mark.textContent = `${Math.floor(t / 60)}:${(t % 60).toString().padStart(2, "0")}`;
  }
  ruler.appendChild(mark);
}
document.getElementById("playhead").style.left = `${(4.876 / DURATION) * 100}%`;

// level scale
const scale = document.getElementById("scale-db");
for (let db = -60; db <= 0; db++) {
  const li = document.createElement("li");
  li.textContent = db === -60 ? "dB" : db;
  scale.appendChild(li);
}

// phase meter ticks
let ticks = "M6 0v86";
for (let i = 0; i < 20; i++) {
  ticks += `M6 ${2 + i * 4.4}h${i % 5 === 1 ? 7 : 4}`;
}
document.getElementById("db-ticks").setAttribute("d", ticks);

// waveform: [x, height] envelope per channel
const left = [[0,4],[5,6],[8,14],[10,6],[20,6],[24,11],[30,6],[40,6],[52,11],[60,9],[66,6],[80,6],[90,11],[95,5],[105,10],[112,6],[117,9],[119,18],[122,8],[140,10],[155,8],[170,10],[185,16],[200,18],[207,26],[212,15],[225,12],[235,8],[245,10],[258,12],[268,24],[275,17],[290,18],[300,14],[310,16],[320,12],[325,24],[330,24],[334,7],[350,6],[360,8],[380,6],[388,14],[395,15],[405,10],[415,13],[440,10],[448,13],[453,22],[457,11],[468,22],[474,13],[490,14],[497,12],[505,19],[520,19],[530,20],[540,19],[550,22],[567,27],[573,20],[582,14],[595,13],[605,17],[619,12],[621,26],[635,21],[660,20],[680,20],[700,20],[720,23],[735,26],[745,28],[748,12],[752,4],[765,4],[780,5],[790,3],[805,6],[820,4],[840,4]];
const right = [[0,4],[10,6],[30,5],[40,5],[45,8],[52,10],[60,10],[70,7],[85,8],[95,7],[105,11],[112,8],[118,14],[125,8],[140,6],[160,7],[175,11],[185,16],[200,18],[207,25],[212,18],[225,15],[230,9],[234,5],[245,15],[258,14],[268,21],[275,22],[290,18],[305,19],[318,15],[325,20],[330,28],[333,12],[338,4],[360,6],[380,5],[390,12],[397,15],[405,8],[420,12],[430,11],[445,10],[460,15],[470,12],[485,15],[500,12],[506,22],[530,22],[545,20],[567,27],[575,19],[590,16],[600,18],[619,12],[621,25],[640,22],[680,22],[700,22],[720,24],[745,27],[748,12],[752,4],[780,4],[805,6],[820,4],[840,4]];

let seed = 7;
function rand() {
  seed = (seed * 16807) % 2147483647;
  return seed / 2147483647;
}
function heightAt(env, x) {
  const i = Math.max(1, env.findIndex((p) => p[0] >= x));
  const [x0, y0] = env[i - 1];
  const [x1, y1] = env[i];
  return y0 + ((y1 - y0) * (x - x0)) / (x1 - x0);
}
// mostly a steady body with a sharp peak now and then
function peak(h) {
  const spike = rand() > 0.72 ? 0.5 * rand() : 0;
  return h * (0.6 + 0.16 * rand() + spike);
}
function channel(env, mid) {
  const top = [];
  const bottom = [];
  for (let x = 0; x <= 840; x++) {
    const h = heightAt(env, x);
    top.push(`${x} ${(mid - peak(h)).toFixed(1)}`);
    bottom.unshift(`${x} ${(mid + peak(h) * 0.95).toFixed(1)}`);
  }
  return `<path d="M${top.join("L")}L${bottom.join("L")}Z"/>`;
}
document.getElementById("waveform").innerHTML =
  channel(left, 36) + channel(right, 92) +
  '<path fill="#b9b88a" fill-opacity=".6" d="M0 48.500h840v1.300H0z"/>' +
  '<path fill="#75857f" d="M0 64h840v2H0z"/>' +
  '<path fill="#ddd" d="M0 9h5l-5 5z"/>';
```
